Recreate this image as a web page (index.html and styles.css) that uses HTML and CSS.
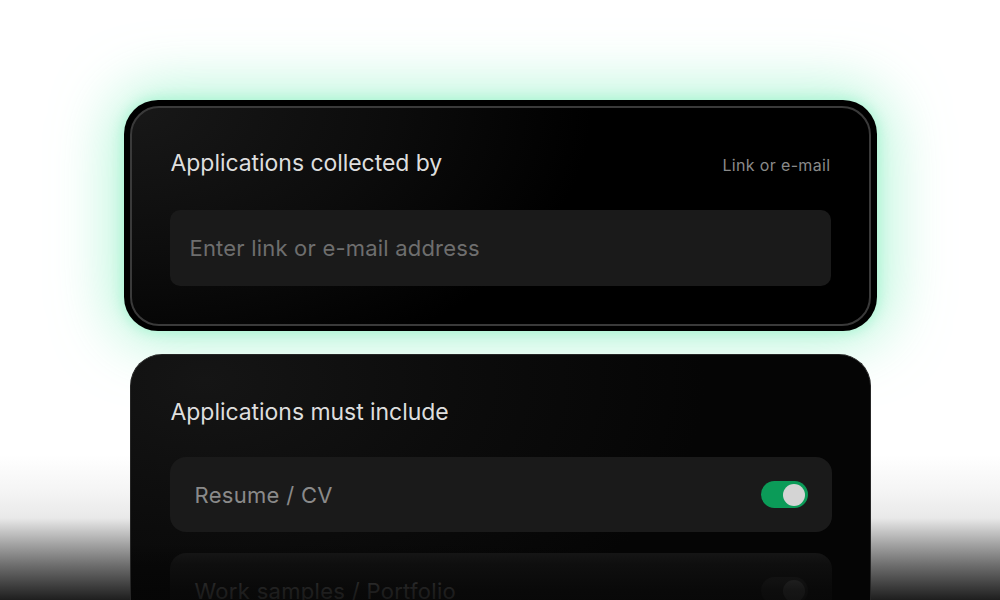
FILE: index.html
```html
<!DOCTYPE html>
<html lang="en">
<head>
<meta charset="utf-8">
<title>Applications</title>
<link rel="stylesheet" href="styles.css">
</head>
<body>
<main class="stage">
  <section class="card-glow">
    <div class="card card-collect">
      <div class="card-head">
        <h2 class="card-title">Applications collected by</h2>
        <span class="card-hint">Link or e-mail</span>
      </div>
      <div class="field">
        <input class="field-input" type="text" placeholder="Enter link or e-mail address">
      </div>
    </div>
  </section>

  <section class="card card-include">
    <h2 class="card-title">Applications must include</h2>
    <div class="rows">
      <div class="row">
        <span class="row-label">Resume / CV</span>
        <span class="toggle toggle-on"><span class="knob"></span></span>
      </div>
      <div class="row">
        <span class="row-label">Work samples / Portfolio</span>
        <span class="toggle toggle-off"><span class="knob"></span></span>
      </div>
    </div>
    <div class="fade"></div>
  </section>
</main>
</body>
</html>
```

FILE: styles.css
```css
* { box-sizing: border-box; }

html, body {
  margin: 0;
  height: 600px;
  overflow: hidden;
}

body {
  font-family: Inter, "Noto Sans", sans-serif;
  background: linear-gradient(180deg,
    #ffffff 0px,
    #ffffff 455px,
    #f5f5f5 490px,
    #e9e9e9 518px,
    #c4c4c4 532px,
    #9c9c9c 547px,
    #6c6c6c 566px,
    #404040 585px,
    #1e1e1e 600px);
}

.stage {
  display: flex;
  flex-direction: column;
  align-items: center;
  padding-top: 100px;
  gap: 23px;
}

.card-glow {
  width: 753px;
  padding: 6px 6px 5px 6px;
  background: #000;
  border-radius: 34px;
  box-shadow: 0 0 12px 2px rgba(150, 242, 200, 0.6), 0 0 60px 10px rgba(150, 242, 200, 0.75);
}

.card {
  border-radius: 29px;
  border: 2px solid #333;
  color: #e2e2e2;
}

.card-collect {
  padding: 40px 38px 38px 38px;
  background: radial-gradient(ellipse 460px 280px at 0% 0%, #181818 0%, #0c0c0c 55%, #000 100%);
  border-color: #3a3a3a;
}

.card-head {
  display: flex;
  align-items: center;
  justify-content: space-between;
  height: 30px;
  margin-bottom: 32px;
  padding-left: 1px;
}

.card-title {
  margin: 0;
  font-size: 23px;
  font-weight: 400;
  line-height: 30px;
  letter-spacing: -0.05px;
  color: #dedede;
}

.card-hint {
  font-size: 16px;
  color: #8a8a8a;
  letter-spacing: 0.35px;
  padding-top: 4px;
}

.field {
  height: 76px;
  border-radius: 10px;
  background: #1a1a1a;
  display: flex;
  align-items: center;
}

.field-input {
  width: 100%;
  height: 100%;
  border: 0;
  outline: 0;
  background: transparent;
  padding: 0 21px 0 20px;
  font-family: inherit;
  font-size: 22px;
  letter-spacing: 0.2px;
  color: #ddd;
}

.field-input::placeholder {
  color: #6e6e6e;
}

.card-include {
  position: relative;
  width: 741px;
  height: 260px;
  padding: 42px 38px 0 39px;
  border: 1px solid #262626;
  border-bottom: 0;
  border-radius: 32px 32px 0 0;
  background: radial-gradient(ellipse 500px 300px at 10% 10%, #151515 0%, #0c0c0c 50%, #050505 100%);
  overflow: hidden;
}

.card-include .card-title {
  padding-left: 1px;
}

.rows {
  margin-top: 30px;
  display: flex;
  flex-direction: column;
  gap: 21px;
}

.row {
  height: 75px;
  border-radius: 16px;
  background: #1a1a1a;
  display: flex;
  align-items: center;
  justify-content: space-between;
  padding: 0 24px 0 25px;
}

.row-label {
  font-size: 22px;
  letter-spacing: 0.3px;
  color: #8a8a8a;
}

.toggle {
  width: 47px;
  height: 27px;
  border-radius: 14px;
  display: flex;
  align-items: center;
  justify-content: flex-end;
  padding: 0 3px;
}

.knob {
  width: 22px;
  height: 22px;
  border-radius: 50%;
}

.toggle-on { background: #0b9b58; }
.toggle-on .knob { background: #d4d4d4; }

.toggle-off { background: #2e2e2e; }
.toggle-off .knob { background: #5a5a5a; }

.fade {
  position: absolute;
  left: 0;
  right: 0;
  bottom: 0;
  height: 70px;
  background: linear-gradient(180deg, rgba(5,5,5,0) 0%, rgba(5,5,5,0.55) 30%, rgba(5,5,5,0.8) 65%, rgba(5,5,5,0.9) 100%);
}
```
